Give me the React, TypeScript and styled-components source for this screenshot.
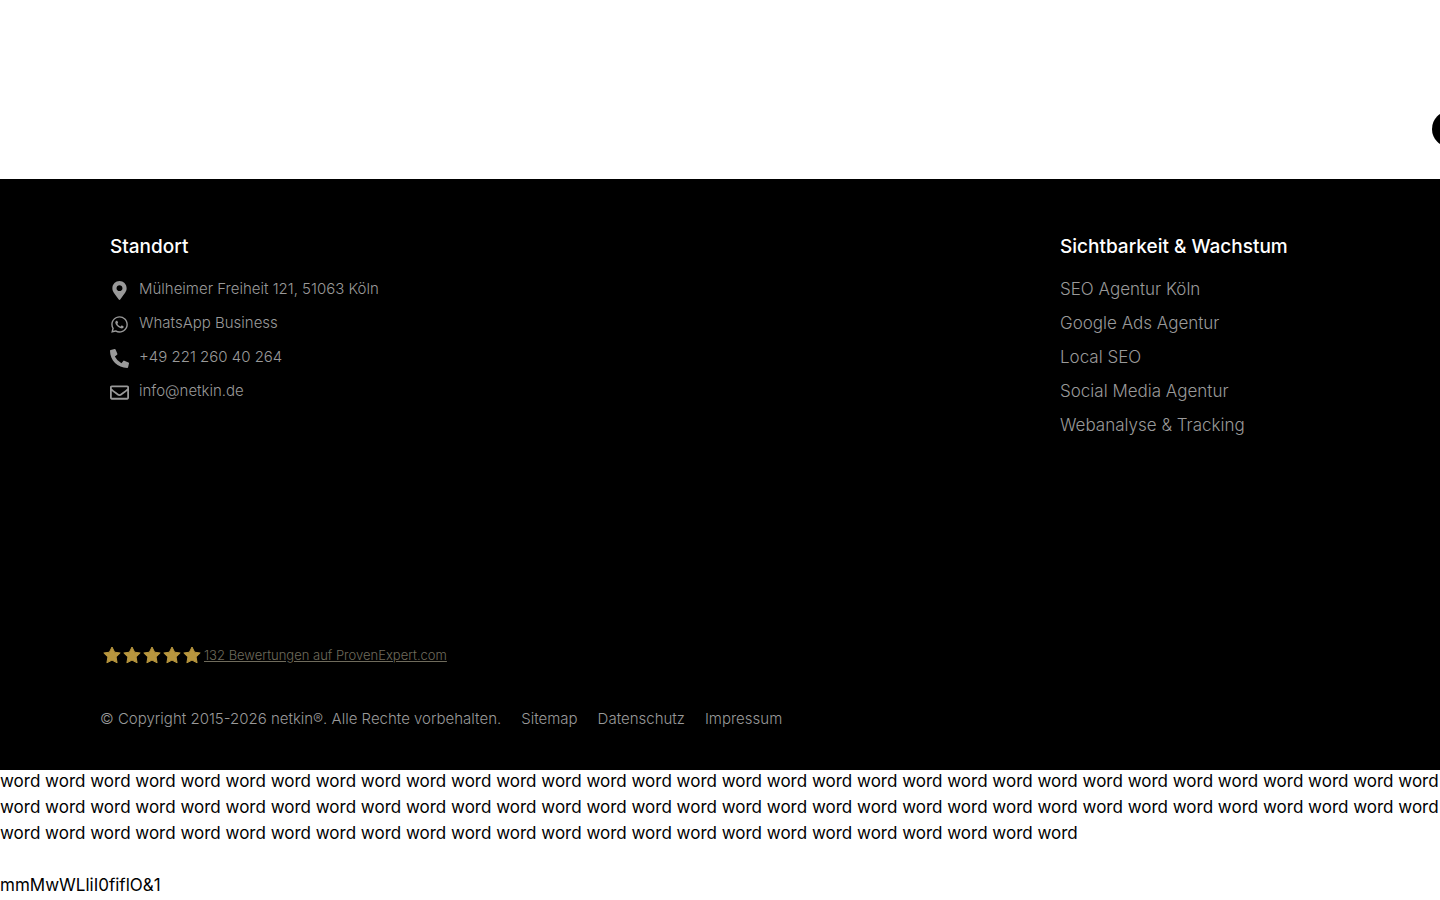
import React from "react";
import styled, { createGlobalStyle } from "styled-components";
import { FaMapMarkerAlt, FaWhatsapp, FaPhoneAlt, FaRegEnvelope, FaChevronUp } from "react-icons/fa";

const GlobalStyle = createGlobalStyle`
  *, *::before, *::after { box-sizing: border-box; }
  body {
    margin: 0;
    overflow-x: hidden;
    background: #fff;
    color: #000;
    font-family: Inter, "Liberation Sans", sans-serif;
    font-size: 17px;
    font-weight: 300;
    line-height: 26px;
  }
`;

const Page = styled.div`
  position: relative;
  overflow: hidden;
`;

const Content = styled.main`
  height: 179px;
`;

const ScrollTop = styled.button`
  position: absolute;
  top: 111px;
  right: -28px;
  width: 36px;
  height: 36px;
  padding: 0;
  display: flex;
  align-items: center;
  justify-content: center;
  border: 0;
  border-radius: 50%;
  background: #000;
  color: #888;
  font-size: 22px;
`;

const Footer = styled.footer`
  padding: 55px 100px 38px;
  background: #000;
  color: #999;
`;

const Columns = styled.div`
  display: flex;
  justify-content: space-between;
  min-height: 409px;
`;

const Column = styled.section<{ $width: number }>`
  width: ${({ $width }) => $width}px;
  padding: 0 10px;
`;

const Heading = styled.h2`
  margin: 0 0 12px;
  color: #fff;
  font-size: 19px;
  font-weight: 500;
  line-height: 26px;
  white-space: nowrap;
`;

const List = styled.ul<{ $compact?: boolean }>`
  display: grid;
  margin: 0;
  padding: 0;
  list-style: none;
  font-size: ${({ $compact }) => ($compact ? 15 : 17)}px;
  line-height: 34px;
`;

const TextLink = styled.a`
  color: inherit;
  text-decoration: none;
  white-space: nowrap;
`;

const ContactLink = styled(TextLink)`
  display: flex;
  align-items: center;
  gap: 10px;

  svg {
    flex: none;
    width: 19px;
    height: 19px;
    margin-top: 2px;
  }
`;

const Rating = styled.a`
  display: flex;
  align-items: center;
  width: max-content;
  margin-left: 2px;
  color: #6f6b5c;
  font-size: 13px;
  line-height: 24px;
  text-decoration: none;
`;

const Stars = styled.span`
  display: flex;
  margin-right: 2px;

  svg {
    width: 20px;
    height: 20px;
    fill: #b8963e;
    stroke: #b8963e;
    stroke-linejoin: round;
  }
`;

const RatingText = styled.span`
  text-decoration: underline;
`;

const Legal = styled.div`
  display: flex;
  gap: 20px;
  margin-top: 39px;
  font-size: 15px;
  line-height: 26px;
  white-space: nowrap;
`;

const Samples = styled.section`
  margin-top: -2px;
  font-weight: 400;
`;

const Sample = styled.p`
  margin: 0 0 26px;
`;

const contacts = [
  { icon: FaMapMarkerAlt, label: "Mülheimer Freiheit 121, 51063 Köln" },
  { icon: FaWhatsapp, label: "WhatsApp Business" },
  { icon: FaPhoneAlt, label: "+49 221 260 40 264" },
  { icon: FaRegEnvelope, label: "info@netkin.de" },
];

const services = [
  "SEO Agentur Köln",
  "Google Ads Agentur",
  "Local SEO",
  "Social Media Agentur",
  "Webanalyse & Tracking",
];

const legalLinks = ["Sitemap", "Datenschutz", "Impressum"];

export default function App() {
  return (
    <Page>
      <GlobalStyle />
      <Content>
        <ScrollTop type="button" aria-label="Nach oben">
          <FaChevronUp />
        </ScrollTop>
      </Content>
      <Footer>
        <Columns>
          <Column $width={310}>
            <Heading>Standort</Heading>
            <List $compact>
              {contacts.map(({ icon: Icon, label }) => (
                <li key={label}>
                  <ContactLink href="#">
                    <Icon aria-hidden />
                    {label}
                  </ContactLink>
                </li>
              ))}
            </List>
          </Column>
          <Column $width={290}>
            <Heading>Sichtbarkeit &amp; Wachstum</Heading>
            <List>
              {services.map((label) => (
                <li key={label}>
                  <TextLink href="#">{label}</TextLink>
                </li>
              ))}
            </List>
          </Column>
        </Columns>
        <Rating href="#">
          <Stars aria-hidden>
            {[1, 2, 3, 4, 5].map((n) => (
              <svg key={n} viewBox="0 0 20 20">
                <path d="M10 2 12.6 7.200 18.200 8 14.100 12 15.100 17.800 10 15.100 4.900 17.800 5.900 12 1.800 8 7.400 7.200Z" />
              </svg>
            ))}
          </Stars>
          <RatingText>132 Bewertungen auf ProvenExpert.com</RatingText>
        </Rating>
        <Legal>
          <span>© Copyright 2015-2026 netkin®. Alle Rechte vorbehalten.</span>
          {legalLinks.map((label) => (
            <TextLink key={label} href="#">
              {label}
            </TextLink>
          ))}
        </Legal>
      </Footer>
      <Samples>
        <Sample>{Array(88).fill("word").join(" ")}</Sample>
        <Sample>mmMwWLliI0fiflO&amp;1</Sample>
      </Samples>
    </Page>
  );
}
